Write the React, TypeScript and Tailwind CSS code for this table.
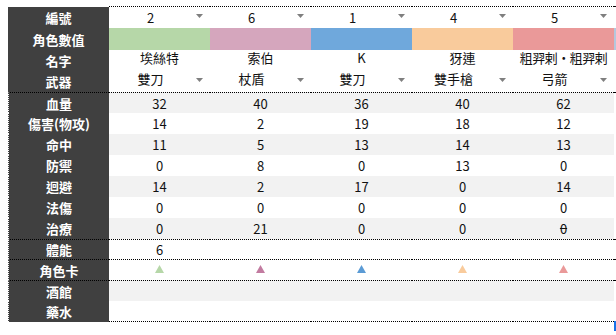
import React from 'react';

type Row = {
  label: string;
  cells: React.ReactNode[];
  h: string;
  gray?: boolean;
  lineTop?: 'all' | 'data';
  lineBottom?: boolean;
  dropdown?: boolean;
  dotLeft?: boolean;
  lift?: boolean;
};

const colors = ['bg-[#b6d7a8]', 'bg-[#d5a6bd]', 'bg-[#6fa8dc]', 'bg-[#f9cb9c]', 'bg-[#ea9999]'];
const triColors = ['#b6d7a8', '#c27ba0', '#5b9bd5', '#f9cb9c', '#ea9999'];

const Tri = ({ color }: { color: string }) => (
  <svg width="9" height="8" viewBox="0 0 9 8" className="mb-[2px]">
    <polygon points="4.5,0 9,8 0,8" fill={color} />
  </svg>
);

const Arrow = () => (
  <svg width="7" height="4" viewBox="0 0 7 4" className="absolute right-[7px] top-[7px]">
    <polygon points="0,0 7,0 3.5,4" fill="#7f7f7f" />
  </svg>
);

const stats: [string, number[]][] = [
  ['血量', [32, 40, 36, 40, 62]],
  ['傷害(物攻)', [14, 2, 19, 18, 12]],
  ['命中', [11, 5, 13, 14, 13]],
  ['防禦', [0, 8, 0, 13, 0]],
  ['迴避', [14, 2, 17, 0, 14]],
  ['法傷', [0, 0, 0, 0, 0]],
  ['治療', [0, 21, 0, 0, 0]],
];

const rows: Row[] = [
  { label: '編號', cells: ['2', '6', '1', '4', '5'], h: 'h-[22px]', lineTop: 'data', dropdown: true },
  { label: '角色數值', cells: ['', '', '', '', ''], h: 'h-[22px]' },
  { label: '名字', cells: ['埃絲特', '索伯', 'K', '犽連', '粗羿剌・粗羿剌'], h: 'h-[21px]', lift: true },
  { label: '武器', cells: ['雙刀', '杖盾', '雙刀', '雙手槍', '弓箭'], h: 'h-[21px]', dropdown: true, lift: true },
  ...stats.map(([label, vals], i) => ({
    label,
    cells: vals.map((v, j) =>
      label === '治療' && j === 4 ? <span className="line-through">{v}</span> : String(v)
    ),
    h: 'h-[21px]',
    gray: i % 2 === 0,
    lineTop: i === 0 ? ('all' as const) : undefined,
    dotLeft: true,
  })),
  { label: '體能', cells: ['6', '', '', '', ''], h: 'h-[20px]', lineTop: 'all', dotLeft: true },
  {
    label: '角色卡',
    cells: triColors.map((c) => <Tri color={c} />),
    h: 'h-[21px]',
    lineTop: 'all',
    dotLeft: true,
  },
  { label: '酒館', cells: ['', '', '', '', ''], h: 'h-[21px]', gray: true, lineTop: 'all', dotLeft: true },
  { label: '藥水', cells: ['', '', '', '', ''], h: 'h-[21px]', lineBottom: true, dotLeft: true },
];

export default function App() {
  return (
    <div
      className="w-[616px] h-[335px] bg-white overflow-hidden relative pt-[6px] pl-[8px]"
      style={{ fontFamily: '"Noto Sans CJK TC", "Noto Sans", sans-serif' }}
    >
      <div className="grid grid-cols-[101px_repeat(5,101px)_2px]">
        {rows.map((r, ri) => (
          <React.Fragment key={ri}>
            <div
              className={`${r.h} bg-[#404040] text-white font-bold text-[13px] flex items-center justify-center leading-none ${
                r.lineTop === 'all' ? 'border-t border-dotted border-black' : ''
              } ${r.lineTop === 'data' ? 'border-t border-white' : ''} ${
                r.dotLeft ? 'border-l border-dotted border-l-white' : ''
              }`}
            >
              {r.label}
            </div>
            {r.cells.map((c, ci) => (
              <div
                key={ci}
                className={`${r.h} relative flex items-center text-[13px] text-[#111] leading-none ${
                  r.label === '角色數值' ? colors[ci] : r.gray ? 'bg-[#f2f2f2]' : 'bg-white'
                } ${r.lineTop ? 'border-t border-dotted border-black' : ''} ${
                  r.lineBottom ? 'border-b border-dotted border-black' : ''
                } ${r.dropdown ? 'justify-center pr-[18px]' : 'justify-center'} ${
                  r.lift ? 'pb-[6px]' : ''
                } ${ri === 2 && ci === 4 ? 'tracking-[-0.5px] whitespace-nowrap' : ''}`}
              >
                {c}
                {r.dropdown && <Arrow />}
              </div>
            ))}
            <div
              className={`${r.h} ${r.label === '角色數值' ? 'bg-[#b4c7dc]' : 'bg-white'} ${
                r.lineTop ? 'border-t border-dotted border-black' : ''
              } ${r.lineBottom ? 'border-b border-dotted border-black' : ''}`}
            />
          </React.Fragment>
        ))}
      </div>
      <div className="absolute left-[614px] top-[321px] w-[3px] h-[10px] bg-[#1a73e8]" />
    </div>
  );
}
